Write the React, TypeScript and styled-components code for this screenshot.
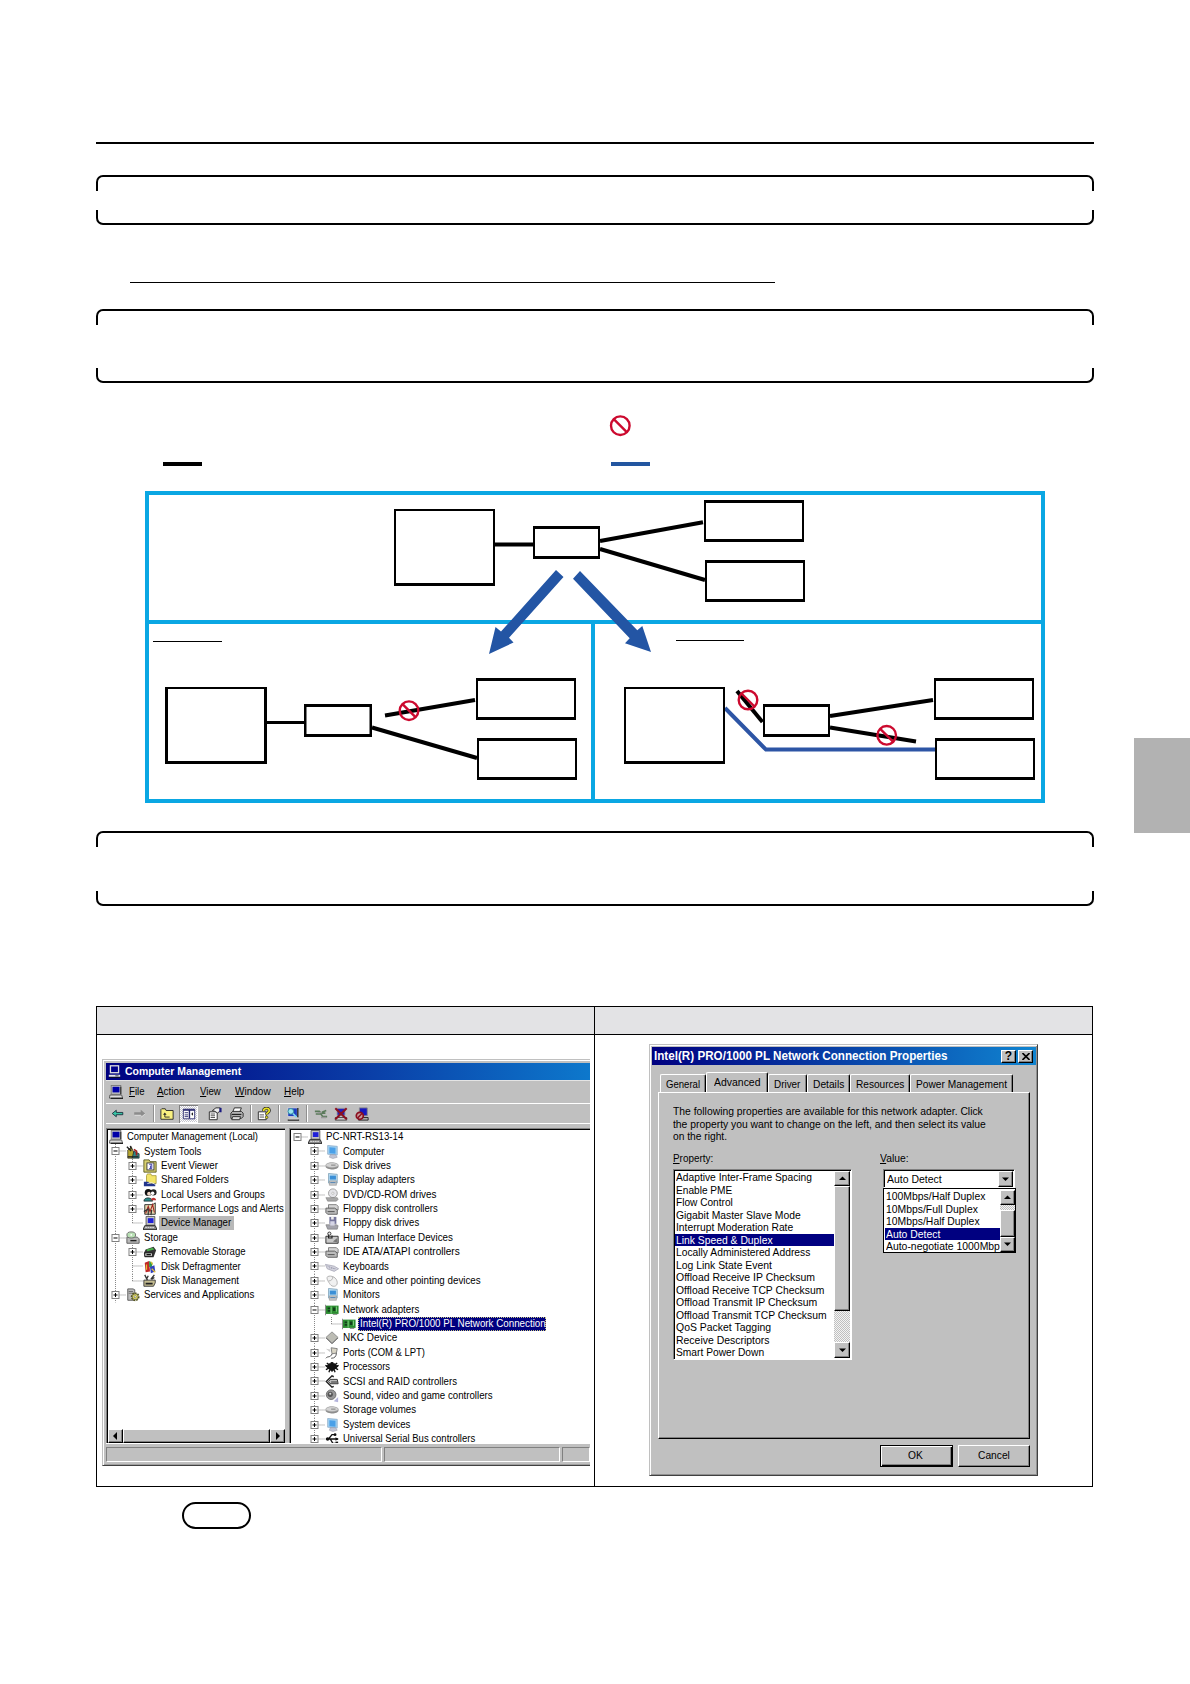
import React from "react";
import styled, { createGlobalStyle, css } from "styled-components";

const GlobalStyle = createGlobalStyle`
  body {
    margin: 0;
    background: #fff;
    font-family: "Liberation Sans", Arial, sans-serif;
  }
  * {
    box-sizing: border-box;
  }
`;

const Page = styled.div`
  display: flex;
  align-items: flex-start;
  width: 1190px;
  height: 1684px;
  overflow: hidden;
  background: #fff;
`;

const Sheet = styled.main`
  width: 998px;
  margin-left: 96px;
  padding-top: 142px;
`;

const SideTab = styled.div`
  width: 56px;
  height: 95px;
  margin: 738px 0 0 40px;
  background: #b2b2b2;
`;

const HeadRule = styled.div`
  height: 2px;
  background: #000;
`;

const Underline = styled.div`
  width: 645px;
  height: 1px;
  margin: 57px 0 26px 34px;
  background: #000;
`;

const BracketBox = styled.div<{ $height: number; $top?: number }>`
  display: flex;
  flex-direction: column;
  justify-content: space-between;
  width: 997.5px;
  height: ${(p) => p.$height}px;
  margin-top: ${(p) => p.$top || 0}px;
`;

const BracketTop = styled.div`
  height: 16px;
  border: 2px solid #000;
  border-bottom: 0;
  border-radius: 7px 7px 0 0;
`;

const BracketBottom = styled.div`
  height: 15px;
  border: 2px solid #000;
  border-top: 0;
  border-radius: 0 0 7px 7px;
`;

const Bracket = ({ height, top }: { height: number; top?: number }) => (
  <BracketBox $height={height} $top={top}>
    <BracketTop />
    <BracketBottom />
  </BracketBox>
);

const Legend = styled.div`
  display: grid;
  grid-template-columns: 448px auto;
  row-gap: 25px;
  margin-top: 32px;
  padding-left: 67px;
`;

const LegendCell = styled.div<{ $tall?: boolean }>`
  height: ${(p) => (p.$tall ? 22 : 4)}px;
`;

const LegendBar = styled.div<{ $color: string }>`
  width: 39px;
  height: 4px;
  background: ${(p) => p.$color};
`;

const LegendSign = styled.svg`
  display: block;
  margin-left: -2px;
`;

const Diagram = styled.div`
  position: relative;
  display: grid;
  grid-template-columns: 446px 1fr;
  grid-template-rows: 129px 1fr;
  width: 900px;
  height: 312px;
  margin: 25px 0 0 49px;
  border: 4px solid #0aa7e3;
`;

const DiagramCell = styled.div<{ $wide?: boolean; $right?: boolean }>`
  ${(p) => p.$wide && "grid-column: 1 / 3; border-bottom: 4px solid #0aa7e3;"}
  ${(p) => p.$right && "border-left: 4px solid #0aa7e3; margin-left: -4px;"}
`;

const DiagramInk = styled.svg`
  position: absolute;
  top: -4px;
  left: -4px;
`;

const CaptureTable = styled.div`
  display: grid;
  grid-template-columns: 497px 1fr;
  grid-template-rows: 28px 1fr;
  width: 997px;
  height: 481px;
  margin-top: 100px;
  border: 1px solid #000;
`;

const HeadCell = styled.div<{ $second?: boolean }>`
  background: #e3e3e5;
  border-bottom: 1px solid #000;
  ${(p) => p.$second && "border-left: 1px solid #000;"}
`;

const BodyCell = styled.div<{ $second?: boolean }>`
  padding: ${(p) => (p.$second ? "9px 0 0 54px" : "24px 0 0 5px")};
  ${(p) => p.$second && "border-left: 1px solid #000;"}
`;

const Pill = styled.div`
  width: 69px;
  height: 27px;
  margin: 15px 0 0 86px;
  border: 2px solid #000;
  border-radius: 14px;
`;

/* ---------- shared window parts ---------- */

const Txt = styled.span<{ $k?: number; $size?: number; $bold?: boolean; $up?: boolean }>`
  display: inline-block;
  flex: none;
  white-space: nowrap;
  font-size: ${(p) => p.$size || 11}px;
  font-weight: ${(p) => (p.$bold ? 700 : 400)};
  ${(p) => p.$up && "padding-bottom: 2px;"}
  transform: scaleX(${(p) => p.$k || 0.875});
  transform-origin: 0 50%;
  u {
    text-underline-offset: 1px;
  }
`;

const raised = css`
  background: #c0c0c0;
  border: 1px solid;
  border-color: #fff #000 #000 #fff;
  box-shadow: inset -1px -1px 0 #808080;
`;

const ScrollButton = styled.div<{ $w: number; $h: number }>`
  ${raised}
  flex: none;
  display: flex;
  align-items: center;
  justify-content: center;
  width: ${(p) => p.$w}px;
  height: ${(p) => p.$h}px;
`;

const ScrollThumb = styled.div<{ $size: number; $row?: boolean }>`
  ${raised}
  flex: none;
  ${(p) => (p.$row ? `width: ${p.$size}px; height: 100%;` : `height: ${p.$size}px;`)}
`;

const ScrollTrack = styled.div<{ $size?: number }>`
  ${(p) => (p.$size ? `flex: none; height: ${p.$size}px;` : "flex: 1;")}
  background: repeating-conic-gradient(#c0c0c0 0 25%, #f4f4f4 0 50%) 0 0 / 2px 2px;
`;

const arrows: Record<string, string> = {
  up: "0,4 3.5,0.5 7,4",
  down: "0,0.5 7,0.5 3.5,4",
  left: "5,0 5,8 1,4",
  right: "2,0 2,8 6,4",
};

const Arrow = ({ dir }: { dir: string }) => (
  <svg width="7" height={dir === "up" || dir === "down" ? 5 : 8}>
    <polygon points={arrows[dir]} fill="#000" />
  </svg>
);

/* ---------- icons ---------- */

const Glyph = styled.svg`
  display: block;
  flex: none;
`;

const icons: Record<string, React.ReactNode> = {
  pc: (
    <>
      <rect x="2.5" y="0.5" width="11" height="10" fill="#c8c8c8" stroke="#777" />
      <rect x="4" y="2" width="8" height="6.5" fill="#0000a8" />
      <path d="M1 11.5h13.5l1 3.5H0.5z" fill="#ddd" stroke="#333" strokeWidth="0.8" />
      <path d="M2 15.3h14M13.5 2v8.5" stroke="#222" strokeWidth="1.2" />
    </>
  ),
  pcTitle: (
    <>
      <rect x="3" y="1" width="10" height="8.5" fill="#00008b" stroke="#e0e0e0" strokeWidth="1.6" />
      <path d="M1 12h14v2.5H1z" fill="#e8e8e8" />
      <path d="M1 15.3h14" stroke="#111" />
      <path d="M9 13.3h4" stroke="#333" />
    </>
  ),
  pcDark: (
    <>
      <path d="M3.5 0.5h10v10h-10z" fill="#c4c4c4" stroke="#555" />
      <rect x="5.5" y="2.5" width="6.500" height="5.500" fill="#2020d8" />
      <path d="M2 11h12l2 4.500H0z" fill="#8a8a8a" stroke="#222" />
      <path d="M2.500 13h10" stroke="#eee" strokeDasharray="2 0.700" />
    </>
  ),
  tools: (
    <>
      <path d="M2 6l4-4 4 9-3 4H2z" fill="#b8a830" stroke="#222" strokeWidth="0.8" />
      <path d="M1 2l5 5M5 1l1 4" stroke="#222" strokeWidth="1.6" />
      <path d="M7 15l2-8 6 3v5z" fill="#2a8a8a" stroke="#222" strokeWidth="0.8" />
      <path d="M9 5l3 2v5" stroke="#a02020" strokeWidth="2" fill="none" />
      <path d="M2 13.5h12" stroke="#222" strokeWidth="1.4" />
    </>
  ),
  event: (
    <>
      <path d="M1 1h6l1 2h7v12H1z" fill="#d8d070" stroke="#55551a" />
      <rect x="4.5" y="4.5" width="8" height="8" fill="#fff" stroke="#333" />
      <path d="M7 6h3v5H7M8.500 7.500v3" stroke="#2828a0" fill="none" />
    </>
  ),
  folder: (
    <>
      <path d="M4 3l1-2h4l1 2h5v9H4z" fill="#f2e468" stroke="#9a8a20" strokeWidth="0.8" />
      <path d="M1 10h5l2 2h6v3H1z" fill="#22348c" />
      <path d="M5 12l5-1 4 2" stroke="#eee" fill="none" />
    </>
  ),
  users: (
    <>
      <circle cx="6" cy="5" r="4" fill="#111" />
      <circle cx="7" cy="6.500" r="2.300" fill="#f0d8c8" />
      <circle cx="12" cy="5" r="3.500" fill="#222" />
      <circle cx="11" cy="6" r="2" fill="#fff" />
      <path d="M1 15c0-5 9-5 10 0z" fill="#2b8a8a" stroke="#111" strokeWidth="0.7" />
      <path d="M9 14c0-4 6-4 6 0z" fill="#c03030" />
    </>
  ),
  perf: (
    <>
      <path d="M2 3h9l3-2v13H2z" fill="#e6dcb0" stroke="#222" />
      <path d="M3 13l3-8 2 6 3-8 2 9" stroke="#a02020" strokeWidth="1.3" fill="none" />
      <path d="M1 11l5-3v7M9 15l1-6" stroke="#333" strokeWidth="1.4" fill="none" />
    </>
  ),
  storage: (
    <>
      <path d="M1 7h12l2 2v5H1z" fill="#b8b8b8" stroke="#555" />
      <ellipse cx="6" cy="4.500" rx="5" ry="3.500" fill="#b9e0b4" stroke="#666" />
      <circle cx="6" cy="4.500" r="1" fill="#fff" />
      <path d="M5 11h7" stroke="#222" strokeWidth="1.6" />
    </>
  ),
  removable: (
    <>
      <path d="M3 5l9-3 3 4-3 8H2L1 9z" fill="#333" />
      <path d="M4 5l7-2 2 2-8 2z" fill="#49b049" />
      <path d="M2 9h9v4H2z" fill="#c8c8c8" stroke="#111" />
      <path d="M4 11h5" stroke="#111" strokeWidth="1.5" />
    </>
  ),
  defrag: (
    <>
      <path d="M2 3l5-2 1 12-5 1z" fill="#c02828" />
      <path d="M7 1l4 2-1 5H7z" fill="#2d9a4a" />
      <path d="M8 8l5-2 1 7-5 2z" fill="#3040c0" />
      <path d="M9 2l2 3M10 10l4 4M4 5v6" stroke="#e8c030" strokeWidth="1.4" />
    </>
  ),
  diskman: (
    <>
      <path d="M1 7h13v3l-2 4H1z" fill="#c4bc90" stroke="#333" />
      <path d="M2 1l3 6M6 2l-2 4M9 6l4-5M13 4l-3 2" stroke="#333" strokeWidth="1.5" />
      <path d="M3 11h8" stroke="#222" strokeWidth="2" />
    </>
  ),
  services: (
    <>
      <path d="M2 1h6l2 1v12H2z" fill="#bdbdbd" stroke="#555" />
      <path d="M3 4h5M3 6h5" stroke="#666" />
      <circle cx="10.500" cy="10" r="4" fill="none" stroke="#55551a" strokeWidth="2" strokeDasharray="2 1" />
      <circle cx="10.500" cy="10" r="3.300" fill="#e0dc60" stroke="#333" strokeWidth="0.6" />
      <circle cx="10.500" cy="10" r="1.200" fill="#fff" stroke="#333" strokeWidth="0.5" />
    </>
  ),
  monitor: (
    <>
      <path d="M3 0.500l11 1v10l-11-1z" fill="#9fd0f2" stroke="#8aa8c4" strokeWidth="0.8" />
      <path d="M5 2.500l7 .5v7l-7-.5z" fill="#4aa0e8" />
      <path d="M6 11h6l2 3-5 1.500L5 14z" fill="#c0c4d4" stroke="#889" strokeWidth="0.5" />
    </>
  ),
  display: (
    <>
      <path d="M4 0.500l10 1v10H4z" fill="#b8dcf2" stroke="#7799b0" strokeWidth="0.8" />
      <path d="M5.500 3h7v4.500h-7z" fill="#3b8fd6" />
      <path d="M5 9h8v5H5z" fill="#c9c9c9" stroke="#888" strokeWidth="0.6" />
      <path d="M6 11h6" stroke="#3b78b0" />
    </>
  ),
  disk: (
    <>
      <path d="M0.500 8c0-2 3-4 7-4s8 1 8 4-4 4-7 4-8-1-8-4z" fill="#8e8e8e" />
      <ellipse cx="8" cy="7" rx="7" ry="2.800" fill="#d2d2d2" stroke="#aaa" strokeWidth="0.5" />
      <path d="M7 7h5" stroke="#777" />
    </>
  ),
  dvd: (
    <>
      <circle cx="9" cy="6" r="5" fill="#e4e4e8" stroke="#999" />
      <circle cx="9" cy="6" r="1.300" fill="#fff" stroke="#999" strokeWidth="0.6" />
      <path d="M1 11h13l1 2-2 2H3z" fill="#a8a8a8" stroke="#777" strokeWidth="0.6" />
    </>
  ),
  controller: (
    <>
      <path d="M4 3h9l2 2v4H4z" fill="#d4d4d4" stroke="#777" />
      <path d="M1 7h10l3 2v5H3l-2-2z" fill="#bdbdbd" stroke="#555" />
      <path d="M3 11h8" stroke="#444" />
    </>
  ),
  floppy: (
    <>
      <path d="M5 1h8v8H5z" fill="#77779c" />
      <path d="M7 1h3v3H7z" fill="#eee" />
      <path d="M1 10h12l2 1-1 4H3z" fill="#a4a4ac" stroke="#777" strokeWidth="0.7" />
      <path d="M6 6h5v5H6z" fill="#d6d6e6" />
    </>
  ),
  hid: (
    <>
      <path d="M1 6h14v8H1z" fill="#c8c8c8" stroke="#222" />
      <path d="M4 2v6h4V5" stroke="#222" strokeWidth="1.300" fill="none" />
      <circle cx="5" cy="3" r="1.800" fill="#eee" stroke="#222" />
      <path d="M9 12l5-4v5z" fill="#777" />
    </>
  ),
  keyboard: (
    <>
      <path d="M0.500 5l10 2 5 3-5 3-8-3z" fill="#d4d4de" stroke="#9c9cae" strokeWidth="0.8" />
      <path d="M3 7l8 3M5 9l7 1" stroke="#9494a8" strokeDasharray="1 1" />
    </>
  ),
  mouse: (
    <>
      <path d="M3 3c4-2 11 1 11 7 0 5-6 5-8 2S1 5 3 3z" fill="#f1f1f1" stroke="#aaa" />
      <path d="M4 8c3 0 5-2 5-5" stroke="#aaa" fill="none" />
    </>
  ),
  network: (
    <>
      <path d="M1 3h14.500v9.500H1z" fill="#2b8c30" />
      <path d="M3 5h3v2H3zM3 8h3v2H3zM9 5h3v4H9z" fill="#12401a" />
      <path d="M7 4v8M13 4v6" stroke="#8be08b" />
      <path d="M0.500 2v12M9 13h5" stroke="#777" />
    </>
  ),
  nkc: (
    <>
      <path d="M8 1l7 6.500L8 14 1 7.500z" fill="#bcbcb4" stroke="#888" />
      <path d="M1.500 8L8 14.500 14.500 8" stroke="#555" fill="none" />
    </>
  ),
  port: (
    <>
      <path d="M7 2l7 1-1 5-5 1z" fill="#d8d4c4" stroke="#777" />
      <path d="M8 9c-2 5-5 2-7 5M13 8c0 4-2 6-6 6" stroke="#444" fill="none" />
      <path d="M1 3l5 1v3z" fill="#ccc" />
    </>
  ),
  cpu: (
    <>
      <path d="M8 2.500l7 4.500-7 6-7-6z" fill="#111" stroke="#111" />
      <path d="M2 3.500l3 2M0.500 6l3 2M14 3.500l-3 2M15.500 6l-3 2M1 11l4-2M4.500 14l1-3M15 11l-4-2M11.500 14l-1-3" stroke="#111" strokeWidth="1.500" />
    </>
  ),
  scsi: (
    <>
      <path d="M10 2L8 1 1.500 7.500 8 14l2-1" stroke="#222" strokeWidth="1.600" fill="none" />
      <path d="M6 5h8l1 5H6L4 7.500z" fill="#bbb" stroke="#222" />
      <path d="M7 8h7" stroke="#222" />
    </>
  ),
  sound: (
    <>
      <circle cx="7" cy="6.500" r="5.500" fill="#999" stroke="#666" />
      <circle cx="6" cy="6" r="3" fill="#555" />
      <circle cx="6" cy="5.500" r="1.200" fill="#ddd" />
      <path d="M10 14l5-5v6z" fill="#b4b4dc" />
    </>
  ),
  usb: (
    <>
      <path d="M1 8h14M4 8l4-5h3M6 8l3 5h4" stroke="#111" strokeWidth="1.500" fill="none" />
      <circle cx="3" cy="8" r="2" fill="#111" />
      <circle cx="11.500" cy="3" r="1.600" fill="#111" />
      <path d="M12 11h3v4h-3z" fill="#111" />
      <path d="M12 6l3.500 2-3.500 2z" fill="#111" />
    </>
  ),
  back: (
    <path d="M1.500 8l5-4v2.700h8v2.800h-8v2.500z" fill="#38c4a4" stroke="#123" />
  ),
  forward: (
    <>
      <path d="M15 8l-5.500-4.500v3h-8v3h8v3z" fill="#8c8c8c" />
      <path d="M2 10.300h8v2.200L15 8.500" stroke="#eee" strokeWidth="0.7" fill="none" />
    </>
  ),
  upFolder: (
    <>
      <path d="M1 4V3l1-1h4l1 2h8v10H1z" fill="#f8f080" stroke="#222" />
      <path d="M5.500 8v3.500H11" stroke="#222" fill="none" />
      <path d="M3.500 8.800l2-2.500 2 2.500z" fill="#222" />
    </>
  ),
  panes: (
    <>
      <path d="M1.500 2.500h13v11h-13z" fill="#fff" stroke="#22226a" />
      <path d="M1.500 3.500h13M8.500 3v10" stroke="#22226a" strokeWidth="1.600" />
      <path d="M3 6.500h4M3 9h4M3 11h4" stroke="#22226a" />
      <path d="M12.500 6v4l-2-2z" fill="#111" />
    </>
  ),
  props: (
    <>
      <path d="M1.500 5.500h9v9h-9z" fill="#fff" stroke="#222" />
      <path d="M3 8h5M3 10h5M3 12h5" stroke="#444" />
      <path d="M5 4l4-3h5v3l-3 3-3-2z" fill="#eee" stroke="#222" />
      <path d="M13 1h2.500v5H13z" fill="#1a1a80" />
    </>
  ),
  print: (
    <>
      <path d="M5 1h8l-2 5H3z" fill="#fff" stroke="#222" />
      <path d="M1 7l2-2h10l2 2v4l-2 2H1z" fill="#b4b4b4" stroke="#222" />
      <path d="M3 11h9l-1 3.500H2z" fill="#ddd" stroke="#222" />
      <path d="M2 8.500h11" stroke="#222" strokeWidth="1.400" />
    </>
  ),
  help: (
    <>
      <path d="M1.500 5.500h9v9h-9z" fill="#fff" stroke="#222" />
      <path d="M3 9h5M3 11.500h5" stroke="#444" />
      <path d="M7.500 4.500c0-4 6.500-4 6.500-.5 0 2.500-3 2-3 4.500" stroke="#222" strokeWidth="3.600" fill="none" />
      <path d="M7.500 4.500c0-4 6.500-4 6.500-.5 0 2.500-3 2-3 4.500" stroke="#e8e020" strokeWidth="2" fill="none" />
      <circle cx="11" cy="11.800" r="1.500" fill="#e8e020" stroke="#222" strokeWidth="0.7" />
    </>
  ),
  scan: (
    <>
      <path d="M2 1h11v10H2z" fill="#1c3cc0" stroke="#dcdcdc" />
      <path d="M13.500 1v11M2 15h13" stroke="#222" strokeWidth="1.500" />
      <path d="M3 12h11v2H3z" fill="#ccc" />
      <circle cx="5.500" cy="5" r="3.200" fill="#9ce4f0" stroke="#2a8898" />
      <path d="M8 7.500l4 4" stroke="#7cd4f0" strokeWidth="2" />
    </>
  ),
  plug: (
    <>
      <path d="M1 5h5l2 2h5M2 8h6l2 3h5M9 6l5-2" stroke="#5a7a5a" strokeWidth="1.800" fill="none" />
      <path d="M4 6.500h5M8 12h6" stroke="#999" strokeWidth="1.500" />
    </>
  ),
  removeDev: (
    <>
      <path d="M3.500 1.500h9v8h-9z" fill="#2020c0" stroke="#999" />
      <path d="M1.500 12h13v3h-13z" fill="#c8c8c8" stroke="#222" strokeWidth="0.800" />
      <path d="M1.500 1.500l13 12.500M14.500 1.500l-13 12.500" stroke="#8c1020" strokeWidth="2.300" />
    </>
  ),
  disableDev: (
    <>
      <path d="M5 1h9v9H5z" fill="#1818c0" stroke="#888" />
      <path d="M4 12h11v3H4z" fill="#aaa" stroke="#222" />
      <circle cx="5.500" cy="10" r="4" fill="#c8a0a0" stroke="#8c1020" strokeWidth="2" />
      <path d="M3 12.500l5-5" stroke="#8c1020" strokeWidth="1.800" />
    </>
  ),
};

const Icon = ({ name, size = 14 }: { name: string; size?: number }) => (
  <Glyph width={size} height={size} viewBox="0 0 16 16">
    {icons[name]}
  </Glyph>
);

/* ---------- computer management window ---------- */

const MgmtWindow = styled.div`
  display: flex;
  flex-direction: column;
  width: 488px;
  height: 407px;
  padding: 3px 0 0 3px;
  overflow: hidden;
  background: #c0c0c0;
  border: 1px solid #c0c0c0;
  border-right: 0;
  border-bottom-color: #404040;
  box-shadow: inset 1px 1px 0 #fff, inset 0 -1px 0 #a0a0a0;
`;

const MgmtTitle = styled.div`
  display: flex;
  align-items: center;
  gap: 4px;
  height: 17px;
  flex: none;
  padding-left: 2px;
  color: #fff;
  background: linear-gradient(90deg, #000080, #0a3fa8 55%, #0d78cc);
`;

const MenuBar = styled.div`
  display: grid;
  grid-template-columns: 20px 28px 42.5px 35px 49px auto;
  align-items: center;
  height: 23px;
  flex: none;
  padding-left: 3px;
  border-top: 1px solid #e4e4e4;
`;

const ToolBar = styled.div`
  display: flex;
  align-items: center;
  height: 20px;
  flex: none;
  padding-left: 4px;
  border-top: 1px solid #fff;
`;

const Tool = styled.div<{ $w: number; $on?: boolean }>`
  display: flex;
  align-items: center;
  justify-content: center;
  width: ${(p) => p.$w}px;
  height: 18px;
  ${(p) =>
    p.$on &&
    css`
      background: repeating-conic-gradient(#c8c8d0 0 25%, #fff 0 50%) 0 0 / 2px 2px;
      box-shadow: inset 1px 1px 0 #808080, inset -1px -1px 0 #fff;
    `}
`;

const ToolSep = styled.div<{ $m: number }>`
  width: 2px;
  height: 17px;
  margin: 0 ${(p) => p.$m}px;
  background: #fff;
  border-left: 1px solid #909090;
`;

const Panes = styled.div`
  display: flex;
  gap: 4px;
  height: 320px;
  flex: none;
  padding-top: 4px;
  border-top: 1px solid #fff;
`;

const Pane = styled.div<{ $w?: number }>`
  display: flex;
  flex-direction: column;
  justify-content: space-between;
  ${(p) => (p.$w ? `width: ${p.$w}px; flex: none;` : "flex: 1;")}
  overflow: hidden;
  background: #fff;
  border: 1px solid #808080;
  border-right: 0;
  border-bottom: 0;
  box-shadow: inset 1px 1px 0 #000;
`;

const Tree = styled.div<{ $pad: number }>`
  flex: 1;
  min-height: 0;
  overflow: hidden;
  padding: 1px 0 0 ${(p) => p.$pad}px;
`;

const TreeRow = styled.div`
  display: flex;
  align-items: center;
  height: 14.38px;
`;

const TreeLabel = styled.div<{ $picked?: string; $w?: number }>`
  display: flex;
  align-items: center;
  height: 14px;
  margin-left: 2px;
  padding-left: 2px;
  ${(p) => p.$w && `width: ${p.$w}px;`}
  ${(p) => p.$picked === "soft" && "background: #b8b8b8;"}
  ${(p) =>
    p.$picked === "strong" &&
    "background: #000080; color: #fff; outline: 1px dotted #c8c880; outline-offset: -1px;"}
`;

const Scroll = styled.div`
  display: flex;
  flex: none;
  height: 14px;
  margin-left: 1px;
`;

const StatusBar = styled.div`
  display: grid;
  grid-template-columns: 276px 176px 1fr;
  column-gap: 2px;
  flex: none;
  height: 19px;
  padding-top: 3px;
  border-top: 1px solid #fff;
`;

const StatusCell = styled.div`
  border: 1px solid;
  border-color: #808080 #fff #fff #808080;
`;

// one 17px guide cell: + and - boxes, | passing line, t tee, L elbow
const Slot = ({ kind, first }: { kind: string; first?: boolean }) => {
  const box = kind === "+" || kind === "-";
  return (
    <Glyph width="17" height="14.38" viewBox="0 0 17 14.38">
      <g stroke="#888" strokeWidth="1" strokeDasharray="1 1" fill="none">
        {kind !== " " && !first && <path d={kind === "L" ? "M6.500 0v7" : "M6.500 0v14.400"} />}
        {(box || kind === "t" || kind === "L") && <path d="M6.500 7h10.500" />}
      </g>
      {box && (
        <>
          <rect x="3" y="3.500" width="7" height="7" fill="#fff" stroke="#808080" />
          <path d={kind === "+" ? "M4.500 7h4M6.500 5v4" : "M4.500 7h4"} stroke="#000" />
        </>
      )}
    </Glyph>
  );
};

type Node = [guides: string, icon: string, text: string, k?: number, picked?: string];

const leftTree: Node[] = [
  ["", "pc", "Computer Management (Local)", 0.86],
  ["-", "tools", "System Tools", 0.88],
  ["|+", "event", "Event Viewer", 0.88],
  ["|+", "folder", "Shared Folders", 0.9],
  ["|+", "users", "Local Users and Groups", 0.875],
  ["|+", "perf", "Performance Logs and Alerts", 0.865],
  ["|L", "pcDark", "Device Manager", 0.875, "soft"],
  ["-", "storage", "Storage", 0.88],
  ["|+", "removable", "Removable Storage", 0.87],
  ["|t", "defrag", "Disk Defragmenter", 0.87],
  ["|L", "diskman", "Disk Management", 0.88],
  ["+", "services", "Services and Applications", 0.88],
];

const rightTree: Node[] = [
  ["-", "pcDark", "PC-NRT-RS13-14", 0.88],
  [" +", "monitor", "Computer", 0.855],
  [" +", "disk", "Disk drives", 0.89],
  [" +", "display", "Display adapters", 0.875],
  [" +", "dvd", "DVD/CD-ROM drives", 0.9],
  [" +", "controller", "Floppy disk controllers", 0.865],
  [" +", "floppy", "Floppy disk drives", 0.865],
  [" +", "hid", "Human Interface Devices", 0.89],
  [" +", "controller", "IDE ATA/ATAPI controllers", 0.915],
  [" +", "keyboard", "Keyboards", 0.87],
  [" +", "mouse", "Mice and other pointing devices", 0.89],
  [" +", "display", "Monitors", 0.875],
  [" -", "network", "Network adapters", 0.885],
  [" |L", "network", "Intel(R) PRO/1000 PL Network Connection", 0.89, "strong"],
  [" +", "nkc", "NKC Device", 0.905],
  [" +", "port", "Ports (COM & LPT)", 0.86],
  [" +", "cpu", "Processors", 0.855],
  [" +", "scsi", "SCSI and RAID controllers", 0.875],
  [" +", "sound", "Sound, video and game controllers", 0.88],
  [" +", "disk", "Storage volumes", 0.885],
  [" +", "monitor", "System devices", 0.875],
  [" +", "usb", "Universal Serial Bus controllers", 0.865],
];

const pickedWidth: Record<string, number> = { soft: 75, strong: 188 };

const TreeRows = ({ nodes }: { nodes: Node[] }) => (
  <>
    {nodes.map(([guides, icon, text, k, picked]) => (
      <TreeRow key={text}>
        {guides.split("").map((g, i) => (
          <Slot key={i} kind={g} first={icon === "pcDark" && guides === "-"} />
        ))}
        <Icon name={icon} />
        <TreeLabel $picked={picked} $w={picked && pickedWidth[picked]}>
          <Txt $up $k={k}>
            {text}
          </Txt>
        </TreeLabel>
      </TreeRow>
    ))}
  </>
);

const ComputerManagement = () => (
  <MgmtWindow>
    <MgmtTitle>
      <Icon name="pcTitle" size={13} />
      <Txt $up $bold $k={0.95}>
        Computer Management
      </Txt>
    </MgmtTitle>
    <MenuBar>
      <Icon name="pc" />
      <Txt $up>
        <u>F</u>ile
      </Txt>
      <Txt $up $k={0.9}>
        <u>A</u>ction
      </Txt>
      <Txt $up>
        <u>V</u>iew
      </Txt>
      <Txt $up $k={0.91}>
        <u>W</u>indow
      </Txt>
      <Txt $up $k={0.9}>
        <u>H</u>elp
      </Txt>
    </MenuBar>
    <ToolBar>
      <Tool $w={15}>
        <Icon name="back" size={13} />
      </Tool>
      <Tool $w={28}>
        <Icon name="forward" size={13} />
      </Tool>
      <ToolSep $m={0} />
      <Tool $w={24}>
        <Icon name="upFolder" />
      </Tool>
      <Tool $w={19} $on>
        <Icon name="panes" />
      </Tool>
      <Tool $w={34}>
        <Icon name="props" />
      </Tool>
      <Tool $w={9}>
        <Icon name="print" />
      </Tool>
      <ToolSep $m={9} />
      <Tool $w={6}>
        <Icon name="help" />
      </Tool>
      <ToolSep $m={11} />
      <Tool $w={3}>
        <Icon name="scan" />
      </Tool>
      <ToolSep $m={12} />
      <Tool $w={1}>
        <Icon name="plug" />
      </Tool>
      <Tool $w={40}>
        <Icon name="removeDev" />
      </Tool>
      <Tool $w={2}>
        <Icon name="disableDev" />
      </Tool>
    </ToolBar>
    <Panes>
      <Pane $w={179}>
        <Tree $pad={2}>
          <TreeRows nodes={leftTree} />
        </Tree>
        <Scroll>
          <ScrollButton $w={15} $h={14}>
            <Arrow dir="left" />
          </ScrollButton>
          <ScrollThumb $row $size={147} />
          <ScrollButton $w={15} $h={14}>
            <Arrow dir="right" />
          </ScrollButton>
        </Scroll>
      </Pane>
      <Pane>
        <Tree $pad={1}>
          <TreeRows nodes={rightTree} />
        </Tree>
      </Pane>
    </Panes>
    <StatusBar>
      <StatusCell />
      <StatusCell />
      <StatusCell />
    </StatusBar>
  </MgmtWindow>
);

/* ---------- adapter properties dialog ---------- */

const Dialog = styled.div`
  width: 389px;
  height: 432px;
  padding: 2px 1px 0 2px;
  background: #c0c0c0;
  border: 1px solid;
  border-color: #c0c0c0 #404040 #404040 #c0c0c0;
  box-shadow: inset 1px 1px 0 #fff, inset -1px -1px 0 #909090;
`;

const DialogTitle = styled.div`
  display: flex;
  align-items: center;
  height: 18px;
  padding-left: 2px;
  color: #fff;
  background: linear-gradient(90deg, #000080, #1084d0);
`;

const TitleButtons = styled.div`
  display: flex;
  gap: 2px;
  margin-left: auto;
  padding-right: 3px;
`;

const TitleButton = styled.div`
  ${raised}
  display: flex;
  align-items: center;
  justify-content: center;
  width: 15px;
  height: 13px;
  color: #000;
  font-size: 12px;
  font-weight: 700;
  line-height: 11px;
`;

const Tabs = styled.div`
  display: flex;
  align-items: flex-end;
  height: 27px;
  margin-left: 8px;
`;

const Tab = styled.div<{ $w: number; $active?: boolean }>`
  display: flex;
  align-items: center;
  width: ${(p) => p.$w}px;
  height: ${(p) => (p.$active ? 20 : 18)}px;
  padding-left: ${(p) => (p.$active ? 7 : 5)}px;
  ${(p) => p.$active && "padding-bottom: 2px;"}
  border: 1px solid #fff;
  border-right-color: #000;
  border-bottom: 0;
  border-radius: 2px 2px 0 0;
  box-shadow: inset -1px 0 0 #808080;
`;

const TabPanel = styled.div`
  display: grid;
  grid-template-columns: 207px auto;
  grid-template-rows: 57px 19px auto;
  width: 372px;
  height: 347px;
  margin-left: 6px;
  padding: 0 0 0 14px;
  border: 1px solid;
  border-color: #fff #000 #000 #fff;
  box-shadow: inset -1px -1px 0 #808080;
`;

const Intro = styled.div`
  display: flex;
  flex-direction: column;
  grid-column: 1 / 3;
  padding-top: 12px;
  line-height: 12.6px;
`;

const FieldLabel = styled.div`
  line-height: 14px;
`;

const ListBox = styled.div`
  display: flex;
  width: 179px;
  height: 191px;
  border: 1px solid;
  border-color: #808080 #fff #fff #808080;
  box-shadow: inset 1px 1px 0 #000;
  padding: 1px;
  background: #fff;
`;

const Options = styled.div`
  flex: 1;
  min-width: 0;
  overflow: hidden;
  background: #fff;
`;

const Option = styled.div<{ $picked?: boolean }>`
  display: flex;
  align-items: center;
  height: 12.52px;
  padding-left: 1px;
  ${(p) => p.$picked && "background: #000080; color: #fff;"}
`;

const ScrollColumn = styled.div<{ $w: number }>`
  display: flex;
  flex-direction: column;
  flex: none;
  width: ${(p) => p.$w}px;
`;

const ComboBox = styled.div`
  display: flex;
  align-items: center;
  justify-content: space-between;
  width: 132px;
  height: 19px;
  margin-left: 3px;
  padding: 1px 1px 0 3px;
  background: #fff;
  border: 1px solid;
  border-color: #808080 #fff #fff #808080;
  box-shadow: inset 1px 1px 0 #000;
`;

const DropList = styled.div`
  display: flex;
  width: 133px;
  height: 65px;
  margin-left: 3px;
  padding: 1px 0 0 1px;
  border: 1px solid #000;
  background: #fff;
`;

const DialogButtons = styled.div`
  display: flex;
  gap: 5px;
  margin: 6px 0 0 228px;
`;

const DialogButton = styled.div<{ $default?: boolean; $pad: number }>`
  ${raised}
  display: flex;
  align-items: center;
  width: 72.5px;
  height: 22px;
  padding-left: ${(p) => p.$pad}px;
  ${(p) =>
    p.$default &&
    "border-color: #000; box-shadow: inset 1px 1px 0 #fff, inset -1px -1px 0 #000, inset -2px -2px 0 #808080;"}
`;

const tabs: [string, number, number, number][] = [
  ["General", 45.5, 0.87, 0],
  ["Advanced", 62.5, 0.95, 1],
  ["Driver", 38.5, 0.9, 0],
  ["Details", 43, 0.93, 0],
  ["Resources", 60, 0.92, 0],
  ["Power Management", 103, 0.925, 0],
];

const properties: [string, number][] = [
  ["Adaptive Inter-Frame Spacing", 0.93],
  ["Enable PME", 0.92],
  ["Flow Control", 0.92],
  ["Gigabit Master Slave Mode", 0.94],
  ["Interrupt Moderation Rate", 0.935],
  ["Link Speed & Duplex", 0.94],
  ["Locally Administered Address", 0.935],
  ["Log Link State Event", 0.945],
  ["Offload Receive IP Checksum", 0.95],
  ["Offload Receive TCP Checksum", 0.94],
  ["Offload Transmit IP Checksum", 0.95],
  ["Offload Transmit TCP Checksum", 0.94],
  ["QoS Packet Tagging", 0.95],
  ["Receive Descriptors", 0.95],
  ["Smart Power Down", 0.93],
];

const speeds = [
  "100Mbps/Half Duplex",
  "10Mbps/Full Duplex",
  "10Mbps/Half Duplex",
  "Auto Detect",
  "Auto-negotiate 1000Mbp",
];

const AdapterProperties = () => (
  <Dialog>
    <DialogTitle>
      <Txt $bold $size={12} $k={0.972}>
        Intel(R) PRO/1000 PL Network Connection Properties
      </Txt>
      <TitleButtons>
        <TitleButton>?</TitleButton>
        <TitleButton>
          <svg width="8" height="7">
            <path d="M0.500 0l7 7M7.500 0l-7 7" stroke="#000" strokeWidth="1.600" />
          </svg>
        </TitleButton>
      </TitleButtons>
    </DialogTitle>
    <Tabs>
      {tabs.map(([name, w, k, active]) => (
        <Tab key={name} $w={w} $active={!!active}>
          <Txt $k={k}>{name}</Txt>
        </Tab>
      ))}
    </Tabs>
    <TabPanel>
      <Intro>
        <Txt $k={0.94}>The following properties are available for this network adapter. Click</Txt>
        <Txt $k={0.94}>the property you want to change on the left, and then select its value</Txt>
        <Txt $k={0.93}>on the right.</Txt>
      </Intro>
      <FieldLabel>
        <Txt $k={0.9}>
          <u>P</u>roperty:
        </Txt>
      </FieldLabel>
      <FieldLabel>
        <Txt $k={0.94}>
          <u>V</u>alue:
        </Txt>
      </FieldLabel>
      <ListBox>
        <Options>
          {properties.map(([name, k]) => (
            <Option key={name} $picked={name === "Link Speed & Duplex"}>
              <Txt $k={k}>{name}</Txt>
            </Option>
          ))}
        </Options>
        <ScrollColumn $w={16}>
          <ScrollButton $w={16} $h={15}>
            <Arrow dir="up" />
          </ScrollButton>
          <ScrollThumb $size={125} />
          <ScrollTrack />
          <ScrollButton $w={16} $h={16}>
            <Arrow dir="down" />
          </ScrollButton>
        </ScrollColumn>
      </ListBox>
      <div>
        <ComboBox>
          <Txt $k={0.95}>Auto Detect</Txt>
          <ScrollButton $w={15} $h={16}>
            <Arrow dir="down" />
          </ScrollButton>
        </ComboBox>
        <DropList>
          <Options>
            {speeds.map((s) => (
              <Option key={s} $picked={s === "Auto Detect"}>
                <Txt $k={0.945}>{s}</Txt>
              </Option>
            ))}
          </Options>
          <ScrollColumn $w={15}>
            <ScrollButton $w={15} $h={15}>
              <Arrow dir="up" />
            </ScrollButton>
            <ScrollTrack $size={5} />
            <ScrollThumb $size={27} />
            <ScrollButton $w={15} $h={15}>
              <Arrow dir="down" />
            </ScrollButton>
          </ScrollColumn>
        </DropList>
      </div>
    </TabPanel>
    <DialogButtons>
      <DialogButton $default $pad={27}>
        <Txt $up $k={0.93}>
          OK
        </Txt>
      </DialogButton>
      <DialogButton $pad={19}>
        <Txt $up $k={0.93}>
          Cancel
        </Txt>
      </DialogButton>
    </DialogButtons>
  </Dialog>
);

/* ---------- network diagram ---------- */

const NoEntry = ({ cx, cy }: { cx: number; cy: number }) => (
  <g stroke="#cc0a2f" strokeWidth="2.400" fill="none">
    <circle cx={cx} cy={cy} r="9.300" />
    <path d={`M${cx - 6.5} ${cy - 6.5}l13 13`} />
  </g>
);

// x, y, width, height, side border
const boxes = [
  [394, 509, 101, 77, 2],
  [533, 526, 67, 33, 2],
  [704, 500, 100, 42, 2],
  [705, 560, 100, 42, 2],
  [165, 687, 102, 77, 3],
  [304, 704, 68, 33, 2.5],
  [476, 678, 100, 42, 2],
  [477, 738, 100, 42, 2],
  [624, 687, 101, 77, 2],
  [763, 704, 67, 33, 2],
  [934, 678, 100, 42, 2],
  [935, 738, 100, 42, 2],
];

const NetworkDiagram = () => (
  <Diagram>
    <DiagramCell $wide />
    <DiagramCell />
    <DiagramCell $right />
    <DiagramInk width="900" height="312" viewBox="145 491 900 312">
      <g stroke="#000" strokeWidth="4" fill="none">
        <path d="M495 544.400h38" />
        <path d="M600 541L703 522.300" />
        <path d="M600 549L705 580" />
        <path d="M267 722.500h37" strokeWidth="3" />
        <path d="M385 715.500L475 700" />
        <path d="M372 727.500L477 758" />
        <path d="M737 691L762.500 722" />
        <path d="M830 716L933 700" />
        <path d="M830 727.500L916 741.500" />
      </g>
      <path d="M725 708L766 749.600H935" stroke="#2d55a5" strokeWidth="4" fill="none" />
      {boxes.map(([x, y, w, h, s]) => (
        <g key={`${x}-${y}`}>
          <rect x={x} y={y} width={w} height={h} fill="#000" />
          <rect
            x={x + s}
            y={y + (h === 77 ? 2 : 3)}
            width={w - s * 2}
            height={h - (h === 77 ? 5 : 6)}
            fill="#fff"
          />
        </g>
      ))}
      <path d="M153 641.500h69M676 640.500h68" stroke="#000" />
      <g fill="#2355a4">
        <path d="M556 570l7.500 7L509 637.700l4.500 4.800L489 654l6.500-27 5.500 4.500z" />
        <path d="M580 571l-7 7.700 56.700 59.600-4.700 5L651 652l-8.700-26-5 4.300z" />
      </g>
      <NoEntry cx={409} cy={710.7} />
      <NoEntry cx={748} cy={700} />
      <NoEntry cx={886.7} cy={735.3} />
    </DiagramInk>
  </Diagram>
);

function App() {
  return (
    <Page>
      <GlobalStyle />
      <Sheet>
        <HeadRule />
        <Bracket height={50} top={31} />
        <Underline />
        <Bracket height={74} />
        <Legend>
          <LegendCell $tall />
          <LegendCell $tall>
            <LegendSign width="22" height="22">
              <NoEntry cx={11.3} cy={10.7} />
            </LegendSign>
          </LegendCell>
          <LegendBar $color="#000" />
          <LegendBar $color="#2356a0" />
        </Legend>
        <NetworkDiagram />
        <Bracket height={75} top={28} />
        <CaptureTable>
          <HeadCell />
          <HeadCell $second />
          <BodyCell>
            <ComputerManagement />
          </BodyCell>
          <BodyCell $second>
            <AdapterProperties />
          </BodyCell>
        </CaptureTable>
        <Pill />
      </Sheet>
      <SideTab />
    </Page>
  );
}

export default App;
